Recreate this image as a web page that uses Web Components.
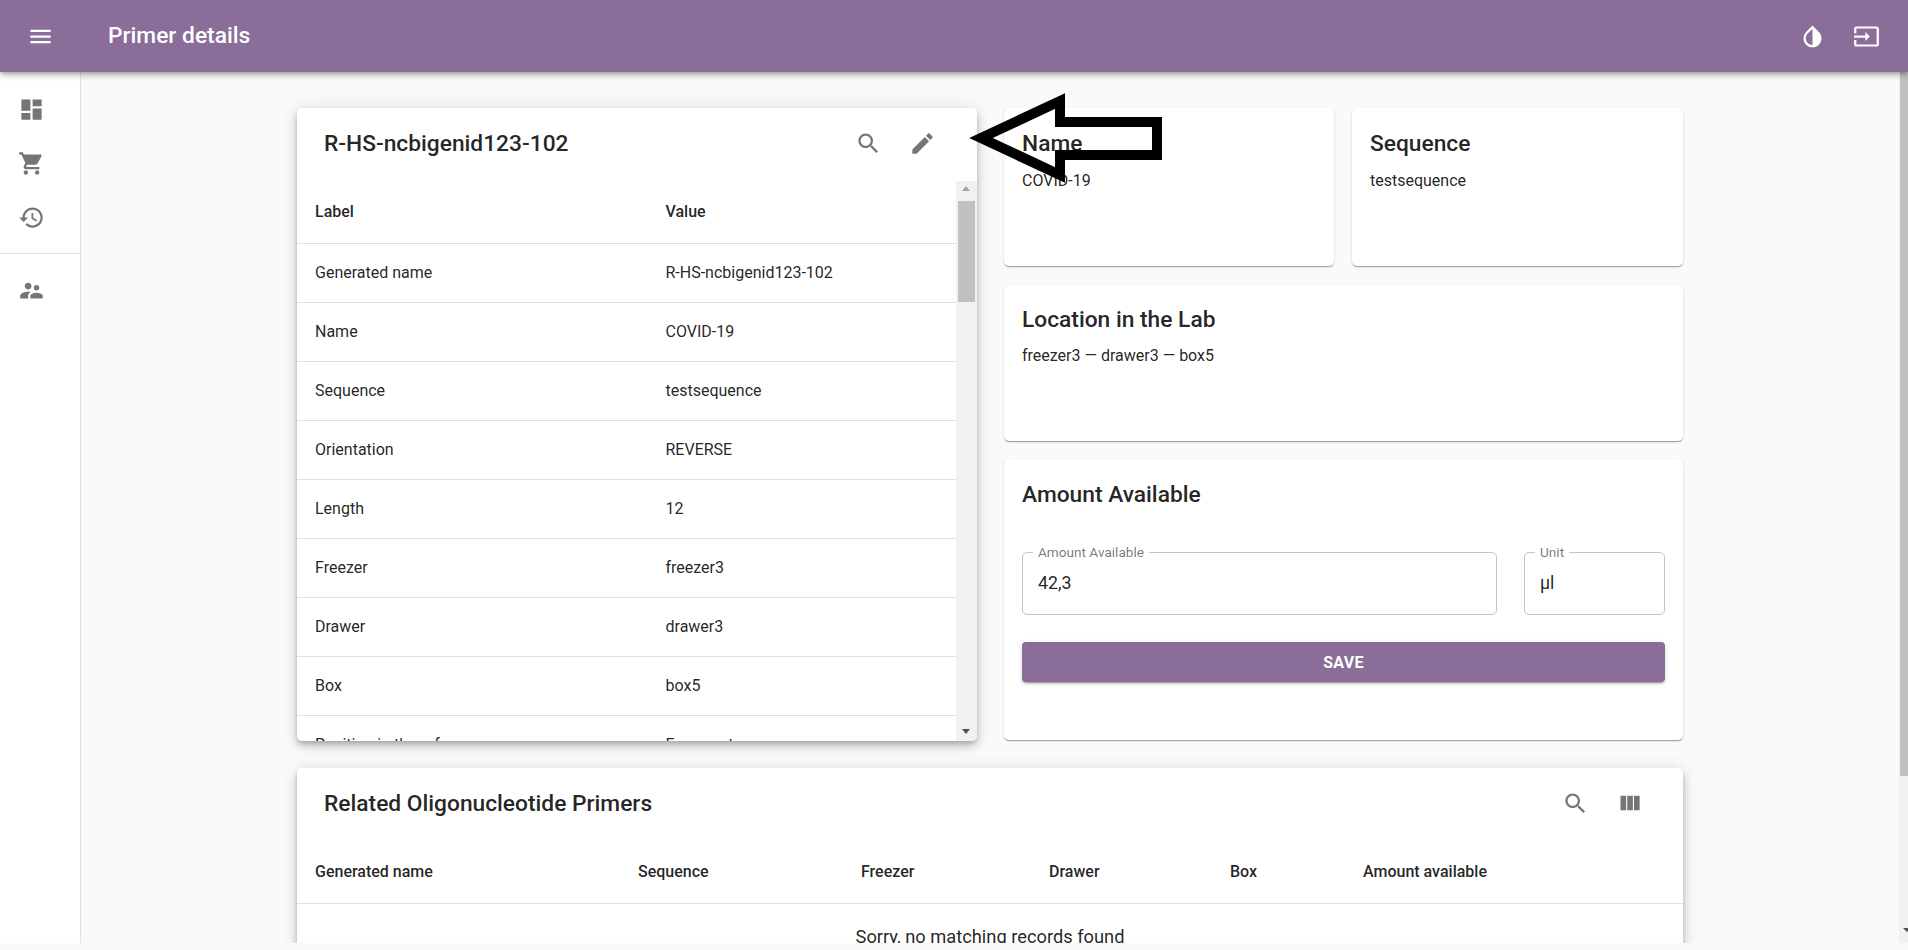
<!DOCTYPE html>
<html>
<head>
<meta charset="utf-8">
<title>Primer details</title>
<style>
    html, body { margin: 0; padding: 0; height: 100%; overflow: hidden; background: #fafafa; }
    body { font-family: Roboto, "Liberation Sans", sans-serif; color: rgba(0,0,0,0.87); }
</style>
</head>
<body>

<primer-app>
    <app-header slot="header" title="Primer details"></app-header>
    <side-nav slot="nav"></side-nav>
    <primer-table slot="primer"></primer-table>
    <info-card slot="name" class="short" heading="Name" value="COVID-19"></info-card>
    <info-card slot="sequence" class="short" heading="Sequence" value="testsequence"></info-card>
    <info-card slot="location" heading="Location in the Lab" value="freezer3 — drawer3 — box5"></info-card>
    <amount-card slot="amount"></amount-card>
    <related-table slot="related"></related-table>
</primer-app>

<script>
const ICONS = {
    menu: 'M3 18h18v-2H3v2zm0-5h18v-2H3v2zm0-7v2h18V6H3z',
    dashboard: 'M3 13h8V3H3v10zm0 8h8v-6H3v6zm10 0h8V11h-8v10zm0-18v6h8V3h-8z',
    cart: 'M7 18c-1.1 0-1.99.9-1.99 2S5.9 22 7 22s2-.9 2-2-.9-2-2-2zM1 2v2h2l3.6 7.59-1.35 2.45c-.16.28-.25.61-.25.96 0 1.1.9 2 2 2h12v-2H7.42c-.14 0-.25-.11-.25-.25l.03-.12.9-1.63h7.45c.75 0 1.41-.41 1.75-1.03l3.58-6.49c.08-.14.12-.31.12-.48 0-.55-.45-1-1-1H5.21l-.94-2H1zm16 16c-1.1 0-1.99.9-1.99 2s.89 2 1.99 2 2-.9 2-2-.9-2-2-2z',
    history: 'M13 3c-4.97 0-9 4.03-9 9H1l3.89 3.89.07.14L9 12H6c0-3.87 3.13-7 7-7s7 3.13 7 7-3.13 7-7 7c-1.93 0-3.68-.79-4.94-2.06l-1.42 1.42C8.27 19.99 10.51 21 13 21c4.97 0 9-4.03 9-9s-4.03-9-9-9zm-1 5v5l4.28 2.54.72-1.21-3.5-2.08V8H12z',
    people: 'M16.5 12c1.38 0 2.49-1.12 2.49-2.5S17.88 7 16.5 7C15.12 7 14 8.12 14 9.5s1.12 2.5 2.5 2.5zM9 11c1.66 0 2.99-1.34 2.99-3S10.66 5 9 5C7.34 5 6 6.34 6 8s1.34 3 3 3zm7.5 3c-1.83 0-5.5.92-5.5 2.75V19h11v-2.25c0-1.83-3.67-2.75-5.5-2.75zM9 13c-2.33 0-7 1.17-7 3.5V19h7v-2.25c0-.85.33-2.34 2.37-3.47C10.5 13.1 9.66 13 9 13z',
    invert: 'M17.66 7.93L12 2.27 6.34 7.93c-3.12 3.12-3.12 8.19 0 11.31C7.9 20.8 9.95 21.58 12 21.58c2.05 0 4.1-.78 5.66-2.34 3.12-3.12 3.12-8.19 0-11.31zM12 19.59c-1.6 0-3.11-.62-4.24-1.76C6.62 16.69 6 15.19 6 13.59s.62-3.11 1.76-4.24L12 5.1v14.49z',
    input: 'M21 3.01H3c-1.1 0-2 .9-2 2V9h2V4.99h18v14.03H3V15H1v4.01c0 1.1.9 1.98 2 1.98h18c1.1 0 2-.88 2-1.98v-14c0-1.11-.9-2-2-2zM11 16l4-4-4-4v3H1v2h10v3z',
    search: 'M15.5 14h-.79l-.28-.27C15.41 12.59 16 11.11 16 9.5 16 5.91 13.09 3 9.5 3S3 5.91 3 9.5 5.91 16 9.5 16c1.61 0 3.09-.59 4.23-1.57l.27.28v.79l5 4.99L20.49 19l-4.99-5zm-6 0C7.01 14 5 11.99 5 9.5S7.01 5 9.5 5 14 7.01 14 9.5 11.99 14 9.5 14z',
    edit: 'M3 17.25V21h3.75L17.81 9.94l-3.75-3.75L3 17.25zM20.71 7.04c.39-.39.39-1.02 0-1.41l-2.34-2.34c-.39-.39-1.02-.39-1.41 0l-1.83 1.83 3.75 3.75 1.83-1.83z',
    columns: 'M10 18h5V5h-5v13zm-6 0h5V5H4v13zM16 5v13h5V5h-5z'
};

function iconSvg(name) {
    return `<svg width="27" height="27" viewBox="0 0 24 24" fill="currentColor"><path d="${ICONS[name]}"/></svg>`;
}

class PrimerApp extends HTMLElement {
    constructor() {
        super();
        this.attachShadow({ mode: 'open' });
        this.shadowRoot.innerHTML = `
            <style>
                :host { display: flex; flex-direction: column; height: 943px; overflow: hidden; position: relative; }
                .body { flex: 1; display: flex; min-height: 0; }
                main { flex: 1; min-width: 0; overflow: hidden; padding: 36px 216px 0; box-sizing: border-box; }
                .top { display: grid; grid-template-columns: 680px 679px; column-gap: 27px; align-items: start; }
                .right { display: grid; grid-template-columns: 330px 331px; column-gap: 18px; row-gap: 18px; }
                .wide { grid-column: 1 / 3; }
                .bottom { margin-top: 27px; }
                .page-bar { width: 9px; flex: none; background: #f1f1f1; position: relative; overflow: hidden; }
                .page-bar i { display: block; height: 704px; margin-left: 1px; background: #c1c1c1; }
                .page-bar b { position: absolute; right: -3px; bottom: 11px; width: 0; height: 0; border: 4px solid transparent; border-top: 4px solid #505050; border-bottom: 0; }
                svg { position: absolute; left: 0; top: 0; pointer-events: none; }
            </style>
            <slot name="header"></slot>
            <div class="body">
                <slot name="nav"></slot>
                <main>
                    <div class="top">
                        <slot name="primer"></slot>
                        <div class="right">
                            <slot name="name"></slot>
                            <slot name="sequence"></slot>
                            <div class="wide"><slot name="location"></slot></div>
                            <div class="wide"><slot name="amount"></slot></div>
                        </div>
                    </div>
                    <div class="bottom"><slot name="related"></slot></div>
                </main>
                <div class="page-bar"><i></i><b></b></div>
            </div>
            <!-- annotation arrow drawn over the screenshot -->
            <svg width="1908" height="943">
                <polygon points="981,138 1060,101 1060,122 1157,122 1157,155 1060,155 1060,175" fill="none" stroke="#000" stroke-width="10" stroke-miterlimit="10"/>
            </svg>
        `;
    }
}

class AppHeader extends HTMLElement {
    constructor() {
        super();
        this.attachShadow({ mode: 'open' });
    }

    connectedCallback() {
        this.shadowRoot.innerHTML = `
            <style>
                :host { display: flex; align-items: center; height: 72px; flex: none; background: #8a6d99; color: #fff; position: relative; z-index: 3;
                    box-shadow: 0 2px 4px -1px rgba(0,0,0,.2), 0 4px 5px 0 rgba(0,0,0,.14), 0 1px 10px 0 rgba(0,0,0,.12); }
                .menu { display: flex; margin-left: 27px; width: 81px; }
                h1 { margin: 0; flex: 1; font-size: 22.75px; font-weight: 500; line-height: 72px; }
                .actions { display: flex; gap: 27px; padding-right: 28px; }
                svg { display: block; }
            </style>
            <span class="menu">${iconSvg('menu')}</span>
            <h1>${this.getAttribute('title')}</h1>
            <div class="actions">${iconSvg('invert')}${iconSvg('input')}</div>
        `;
    }
}

class SideNav extends HTMLElement {
    constructor() {
        super();
        this.attachShadow({ mode: 'open' });
        this.shadowRoot.innerHTML = `
            <style>
                :host { display: block; width: 81px; flex: none; box-sizing: border-box; background: #fff; border-right: 1px solid #e0e0e0; color: #757575; }
                ul { list-style: none; margin: 0; padding: 10px 0 9px; }
                li { height: 54px; display: flex; align-items: center; padding-left: 18px; }
                svg { display: block; }
                hr { margin: 0; border: 0; border-top: 1px solid #e0e0e0; }
            </style>
            <ul>
                <li>${iconSvg('dashboard')}</li>
                <li>${iconSvg('cart')}</li>
                <li>${iconSvg('history')}</li>
            </ul>
            <hr>
            <ul style="padding-top: 9px"><li>${iconSvg('people')}</li></ul>
        `;
    }
}

const CARD_TITLE = 'font-size: 22.75px; font-weight: 500; line-height: 30px; margin: 0;';

class PrimerTable extends HTMLElement {
    constructor() {
        super();
        this.attachShadow({ mode: 'open' });
    }

    connectedCallback() {
        const rows = [
            ['Generated name', 'R-HS-ncbigenid123-102'],
            ['Name', 'COVID-19'],
            ['Sequence', 'testsequence'],
            ['Orientation', 'REVERSE'],
            ['Length', '12'],
            ['Freezer', 'freezer3'],
            ['Drawer', 'drawer3'],
            ['Box', 'box5'],
            ['Position in the reference', 'Fragment']
        ];
        const rowsHtml = rows.map(r => `<div class="row"><span>${r[0]}</span><span>${r[1]}</span></div>`).join('');

        this.shadowRoot.innerHTML = `
            <style>
                :host { display: flex; flex-direction: column; height: 633px; background: #fff; border-radius: 5px; overflow: hidden;
                    box-shadow: 0 3px 5px -1px rgba(0,0,0,.2), 0 6px 10px 0 rgba(0,0,0,.14), 0 1px 18px 0 rgba(0,0,0,.12); }
                .toolbar { height: 73px; flex: none; display: flex; align-items: center; padding: 0 41px 2px 27px; box-sizing: border-box; color: #757575; }
                h2 { ${CARD_TITLE} flex: 1; color: rgba(0,0,0,0.87); }
                .tools { display: flex; gap: 27px; }
                svg { display: block; }
                .scroll { flex: 1; min-height: 0; display: flex; }
                .list { flex: 1; min-width: 0; overflow: hidden; }
                .row { display: grid; grid-template-columns: 350.5px 1fr; padding: 0 0 2px 18px; height: 59px; align-items: center; box-sizing: border-box;
                    border-bottom: 1px solid #e0e0e0; font-size: 16px; color: rgba(0,0,0,0.87); }
                .row.head { height: 63px; font-weight: 500; }
                .bar { width: 21px; flex: none; background: #f1f1f1; position: relative; }
                .thumb { position: absolute; left: 2px; right: 2px; top: 20px; height: 101px; background: #c1c1c1; }
                .up, .down { position: absolute; left: 6px; width: 0; height: 0; border: 4.5px solid transparent; }
                .up { top: 5px; border-bottom: 5px solid #a3a3a3; border-top: 0; }
                .down { bottom: 7px; border-top: 5px solid #505050; border-bottom: 0; }
            </style>
            <div class="toolbar">
                <h2>R-HS-ncbigenid123-102</h2>
                <div class="tools">${iconSvg('search')}${iconSvg('edit')}</div>
            </div>
            <div class="scroll">
                <div class="list">
                    <div class="row head"><span>Label</span><span>Value</span></div>
                    ${rowsHtml}
                </div>
                <div class="bar"><span class="up"></span><span class="thumb"></span><span class="down"></span></div>
            </div>
        `;
    }
}

class InfoCard extends HTMLElement {
    constructor() {
        super();
        this.attachShadow({ mode: 'open' });
    }

    connectedCallback() {
        this.shadowRoot.innerHTML = `
            <style>
                :host { display: block; height: 156px; margin-top: 1px; box-sizing: border-box; padding: 20px 18px; background: #fff; border-radius: 5px;
                    box-shadow: 0 2px 1px -1px rgba(0,0,0,.2), 0 1px 1px 0 rgba(0,0,0,.14), 0 1px 3px 0 rgba(0,0,0,.12); }
                :host(.short) { height: 158px; margin-top: 0; padding-top: 21px; }
                h2 { ${CARD_TITLE} }
                p { margin: 10px 0 0; font-size: 16px; line-height: 22px; }
                :host(.short) p { margin-top: 11px; }
            </style>
            <h2>${this.getAttribute('heading')}</h2>
            <p>${this.getAttribute('value')}</p>
        `;
    }
}

class OutlinedField extends HTMLElement {
    constructor() {
        super();
        this.attachShadow({ mode: 'open' });
    }

    connectedCallback() {
        this.shadowRoot.innerHTML = `
            <style>
                :host { display: block; position: relative; height: 63px; box-sizing: border-box; }
                fieldset { margin: 0; position: absolute; inset: -7px 0 0; padding: 0 10px; border: 1px solid #c4c4c4; border-radius: 5px; }
                legend { padding: 0 5px; font-size: 13.6px; line-height: 14px; color: rgba(0,0,0,0.54); height: 14px; }
                .value { position: absolute; left: 16px; top: 20px; font-size: 17.8px; line-height: 22px; }
            </style>
            <fieldset><legend>${this.getAttribute('label')}</legend></fieldset>
            <span class="value">${this.getAttribute('value')}</span>
        `;
    }
}

class AmountCard extends HTMLElement {
    constructor() {
        super();
        this.attachShadow({ mode: 'open' });
        this.shadowRoot.innerHTML = `
            <style>
                :host { display: block; height: 281px; box-sizing: border-box; padding: 21px 18px; background: #fff; border-radius: 5px;
                    box-shadow: 0 2px 1px -1px rgba(0,0,0,.2), 0 1px 1px 0 rgba(0,0,0,.14), 0 1px 3px 0 rgba(0,0,0,.12); }
                h2 { ${CARD_TITLE} }
                .fields { display: grid; grid-template-columns: 475px 141px; column-gap: 27px; margin-top: 42px; }
                button { display: block; width: 100%; height: 40px; margin-top: 27px; border: 0; border-radius: 4px; background: #8a6d99; color: #fff;
                    font: 700 16px Roboto, sans-serif; letter-spacing: .3px;
                    box-shadow: 0 3px 1px -2px rgba(0,0,0,.2), 0 2px 2px 0 rgba(0,0,0,.14), 0 1px 5px 0 rgba(0,0,0,.12); }
            </style>
            <h2>Amount Available</h2>
            <div class="fields">
                <outlined-field label="Amount Available" value="42,3"></outlined-field>
                <outlined-field label="Unit" value="µl"></outlined-field>
            </div>
            <button>SAVE</button>
        `;
    }
}

class RelatedTable extends HTMLElement {
    constructor() {
        super();
        this.attachShadow({ mode: 'open' });
    }

    connectedCallback() {
        const cols = ['Generated name', 'Sequence', 'Freezer', 'Drawer', 'Box', 'Amount available'];
        this.shadowRoot.innerHTML = `
            <style>
                :host { display: block; background: #fff; border-radius: 5px; height: 400px;
                    box-shadow: 0 3px 5px -1px rgba(0,0,0,.2), 0 6px 10px 0 rgba(0,0,0,.14), 0 1px 18px 0 rgba(0,0,0,.12); }
                .toolbar { height: 73px; box-sizing: border-box; display: flex; align-items: center; padding: 0 40px 2px 27px; color: #757575; }
                h2 { ${CARD_TITLE} flex: 1; color: rgba(0,0,0,0.87); }
                .tools { display: flex; gap: 27px; }
                svg { display: block; }
                .head { display: grid; grid-template-columns: 323px 223px 188px 181px 133px 1fr; padding: 0 0 2px 18px; height: 63px; align-items: center; box-sizing: border-box;
                    border-bottom: 1px solid #e0e0e0; font-size: 16px; font-weight: 500; }
                .empty { text-align: center; font-size: 18.3px; line-height: 22px; padding-top: 22px; }
            </style>
            <div class="toolbar">
                <h2>Related Oligonucleotide Primers</h2>
                <div class="tools">${iconSvg('search')}${iconSvg('columns')}</div>
            </div>
            <div class="head">${cols.map(c => `<span>${c}</span>`).join('')}</div>
            <div class="empty">Sorry, no matching records found</div>
        `;
    }
}

customElements.define('app-header', AppHeader);
customElements.define('side-nav', SideNav);
customElements.define('primer-table', PrimerTable);
customElements.define('info-card', InfoCard);
customElements.define('outlined-field', OutlinedField);
customElements.define('amount-card', AmountCard);
customElements.define('related-table', RelatedTable);
customElements.define('primer-app', PrimerApp);
</script>
</body>
</html>
